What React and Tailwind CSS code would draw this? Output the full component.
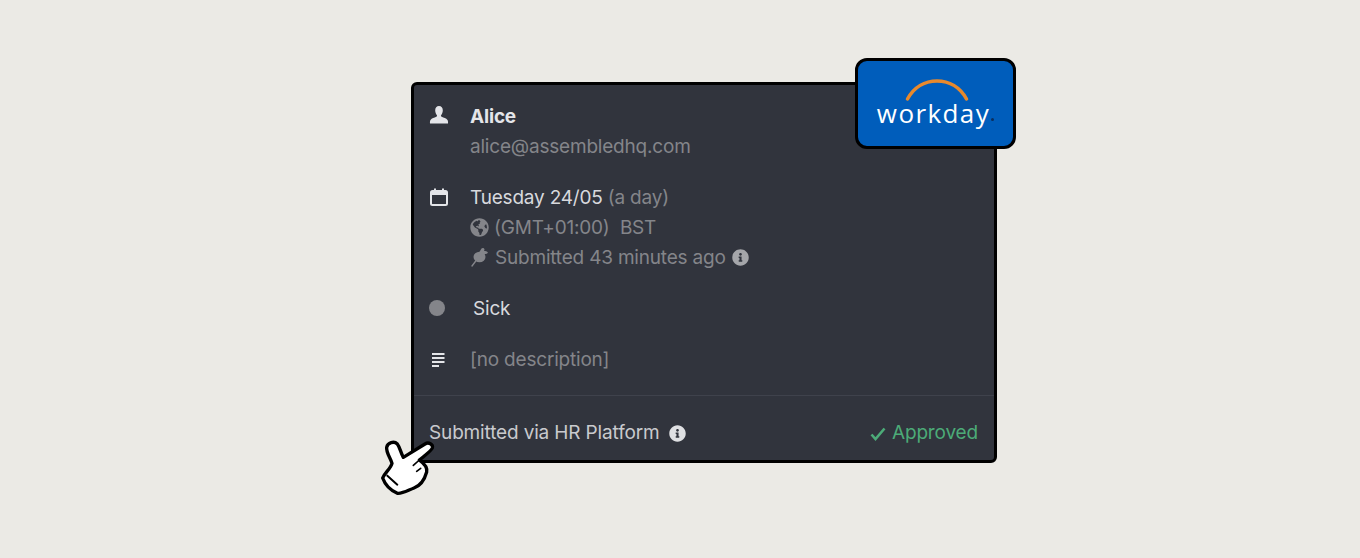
import React from "react";
import { FaGlobeAmericas, FaInfoCircle } from "react-icons/fa";

const font = { fontFamily: 'Inter, "Noto Sans", sans-serif' };

function Person() {
  return (
    <svg width="20" height="21" viewBox="0 0 20 20" fill="#e4e5e9">
      <path d="M10 0.500c2.400 0 3.800 1.900 3.800 4.300 0 2.100-.8 3.700-1.600 4.800-.4.600-.3 1.300.4 1.700 2.200 1 4.600 1.500 5.900 3.200.6.800.6 2.400.5 3.500H1c-.1-1.100-.1-2.700.5-3.500 1.300-1.700 3.700-2.200 5.900-3.200.7-.4.8-1.100.4-1.700-.8-1.100-1.600-2.700-1.600-4.800C6.200 2.400 7.600 0.500 10 0.500z" />
    </svg>
  );
}
function Cal() {
  return (
    <svg width="20" height="20" viewBox="0 0 20 20" fill="none">
      <rect x="2" y="4" width="16" height="14" rx="1.500" stroke="#e4e5e9" strokeWidth="2" />
      <rect x="2" y="4" width="16" height="4" fill="#e4e5e9" />
      <rect x="5" y="1.500" width="2" height="3" fill="#e4e5e9" />
      <rect x="13" y="1.500" width="2" height="3" fill="#e4e5e9" />
    </svg>
  );
}
function Lines() {
  return (
    <svg width="14" height="16" viewBox="0 0 14 16" fill="#e4e5e9">
      <rect x="0" y="0" width="12.500" height="2" />
      <rect x="0" y="4" width="12.500" height="2" />
      <rect x="0" y="8" width="12.500" height="2" />
      <rect x="0" y="12" width="7" height="2" />
    </svg>
  );
}
function Pin() {
  return (
    <svg width="19" height="20" viewBox="0 0 19 20" fill="#84858a">
      <ellipse cx="9.500" cy="10" rx="6" ry="5.200" />
      <path d="M9 5.500C10 4 11 2.500 11.500 1.500C12.500 .5 14 1 14.500 2.200C14.500 3 14.300 3.500 14 4C15.500 4 17.300 4.500 17.800 5.300C18 6.300 16 7 14.500 7L14 10L9 8z" />
      <path d="M6.500 13L2 19" stroke="#84858a" strokeWidth="1.400" strokeLinecap="round" fill="none" />
    </svg>
  );
}
function Hand() {
  return (
    <svg width="100" height="90" viewBox="0 0 300 270" className="absolute left-[-44px] top-[325px]">
      <path
        d="M50 112C53 98 72 92 82 102C90 112 92 128 100 142L165 102C176 95 190 103 187 114C184 122 170 132 148 150C156 156 174 168 170 186C165 204 154 226 132 234C112 242 96 252 82 250C64 242 46 226 38 204C44 188 62 176 66 160C62 144 48 128 50 112Z"
        fill="#fff"
        stroke="#000"
        strokeWidth="10"
        strokeLinejoin="round"
      />
      <path d="M52 197L82 224" stroke="#000" strokeWidth="6" strokeLinecap="round" fill="none" />
      <path d="M148 150L130 166M140 184L152 175" stroke="#000" strokeWidth="5" strokeLinecap="round" fill="none" />
    </svg>
  );
}

export default function App() {
  return (
    <div className="w-[1360px] h-[558px] bg-[#ebeae5] pl-[411px] pt-[82px] overflow-hidden" style={font}>
      <div className="relative w-[586px] h-[381px] bg-[#31343d] border-[3px] border-black rounded-md flex flex-col">
        <div className="flex-1 flex flex-col gap-[21px] pt-[16px] pl-[15px] text-[19px] leading-[30px] tracking-[-0.2px]">
          <div className="flex">
            <div className="w-[41px] pt-[4px]"><Person /></div>
            <div>
              <div className="font-bold text-[#e4e5e9] translate-y-[1px]">Alice</div>
              <div className="text-[#84858a] translate-y-[1px]">alice@assembledhq.com</div>
            </div>
          </div>
          <div className="flex">
            <div className="w-[41px] pt-[5px]"><Cal /></div>
            <div>
              <div className="text-[#d8d9dd] translate-y-[1px]">
                Tuesday 24/05 <span className="text-[#84858a]">(a day)</span>
              </div>
              <div className="flex items-center gap-[5px] text-[#84858a]">
                <FaGlobeAmericas size={19} color="#84858a" />
                <span className="whitespace-pre translate-y-[1px]">(GMT+01:00)  BST</span>
              </div>
              <div className="flex items-center gap-[6px] text-[#84858a]">
                <Pin />
                <span className="translate-y-[1px]">Submitted 43 minutes ago</span>
                <FaInfoCircle size={17} color="#a5a6aa" />
              </div>
            </div>
          </div>
          <div className="flex items-center">
            <div className="w-[44px]"><div className="w-[16px] h-[16px] rounded-full bg-[#84858a]" /></div>
            <div className="text-[#d8d9dd] translate-y-[1px]">Sick</div>
          </div>
          <div className="flex items-center">
            <div className="w-[41px] pl-[3px] pt-[3px]"><Lines /></div>
            <div className="text-[#84858a] translate-y-[1px]">[no description]</div>
          </div>
        </div>
        <div className="h-[65px] pt-[11px] border-t border-[#3f424c] flex items-center justify-between pl-[15px] pr-[16px] text-[19px] tracking-[-0.15px]">
          <div className="flex items-center gap-[9px] text-[#c9cace]">
            <span>Submitted via HR Platform</span>
            <FaInfoCircle size={17} color="#dfe0e3" />
          </div>
          <div className="flex items-center gap-[6px] text-[#4cab78]">
            <svg width="16" height="14" viewBox="0 0 16 14" fill="none">
              <path d="M1.500 7.500L5.500 12L14.500 1.500" stroke="#4cab78" strokeWidth="2.600" />
            </svg>
            <span>Approved</span>
          </div>
        </div>
        <div className="absolute left-[441px] top-[-27px] w-[161px] h-[91px] bg-[#005dbb] border-[3px] border-black rounded-[12px] flex flex-col items-center">
          <svg width="64" height="24" viewBox="0 0 64 24" fill="none" className="mt-[17px] ml-[3px] shrink-0">
            <path d="M2.500 21C9 9 20 3 32 3C44 3 55 9 61.500 21" stroke="#e8892c" strokeWidth="3.500" strokeLinecap="round" />
          </svg>
          <div className="relative text-white text-[26px] leading-[28px] tracking-[1.4px] mt-[-3px] mr-[4px] font-normal" style={{ fontFamily: '"Open Sans", sans-serif' }}>
            workday
            <div className="absolute right-[-4px] bottom-[6px] w-[3px] h-[3px] rounded-full bg-[#0b2e5c]" />
          </div>
        </div>
        <Hand />
      </div>
    </div>
  );
}
